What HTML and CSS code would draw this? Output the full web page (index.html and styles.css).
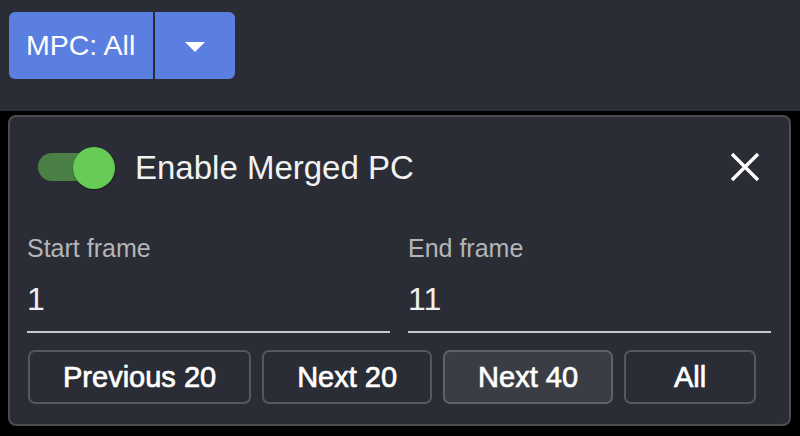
FILE: index.html
```html
<!DOCTYPE html>
<html>
<head>
<meta charset="utf-8">
<link rel="stylesheet" href="styles.css">
</head>
<body>
<div class="topbar">
  <div class="split">
    <button class="split-main">MPC: All</button>
    <button class="split-caret" aria-label="More"><span class="caret"></span></button>
  </div>
</div>
<div class="lower">
  <div class="panel">
    <div class="header">
      <div class="toggle"><span class="track"></span><span class="knob"></span></div>
      <span class="title">Enable Merged PC</span>
      <svg class="close" width="30" height="30" viewBox="0 0 30 30"><path d="M2 2 L28 28 M28 2 L2 28" stroke="#fff" stroke-width="3.4" fill="none"/></svg>
    </div>
    <div class="fields">
      <div class="field">
        <div class="label">Start frame</div>
        <div class="value">1</div>
      </div>
      <div class="field">
        <div class="label">End frame</div>
        <div class="value">11</div>
      </div>
    </div>
    <div class="buttons">
      <button class="btn">Previous 20</button>
      <button class="btn">Next 20</button>
      <button class="btn active">Next 40</button>
      <button class="btn all">All</button>
    </div>
  </div>
</div>
</body>
</html>
```
FILE: styles.css
```css
* { box-sizing: border-box; }
html, body { margin: 0; padding: 0; }
body {
  background: #000;
  font-family: "Liberation Sans", Arial, sans-serif;
  color: #fff;
  width: 800px;
  height: 436px;
  overflow: hidden;
}
.topbar {
  background: #2a2d35;
  height: 111px;
  padding: 12px 9px 0;
}
.split {
  display: flex;
  height: 67px;
  gap: 2px;
}
.split button {
  border: none;
  background: #5b7fe0;
  color: #fff;
  font-family: inherit;
  height: 67px;
  margin: 0;
}
.split-main {
  width: 144px;
  font-size: 28.5px;
  text-align: left;
  padding: 0 0 0 17px;
  border-radius: 6px 0 0 6px;
}
.split-caret {
  width: 80px;
  border-radius: 0 6px 6px 0;
  display: flex;
  align-items: center;
  justify-content: center;
  padding: 0;
}
.caret {
  display: block;
  width: 0;
  height: 0;
  border-left: 10px solid transparent;
  border-right: 10px solid transparent;
  border-top: 10px solid #fff;
  margin-top: 2px;
}
.lower {
  padding: 4px 9px 0 8px;
}
.panel {
  background: #2a2d35;
  border: 2px solid #4b4d53;
  border-radius: 8px;
  padding: 30px 18px 20px 17px;
}
.header {
  display: flex;
  align-items: center;
  height: 42px;
}
.toggle {
  position: relative;
  width: 77px;
  height: 42px;
  margin-left: 11px;
}
.track {
  position: absolute;
  left: 0;
  top: 6px;
  width: 70px;
  height: 28px;
  border-radius: 14px;
  background: #4a8045;
}
.knob {
  position: absolute;
  left: 35px;
  top: 0;
  width: 42px;
  height: 42px;
  border-radius: 50%;
  background: #66cc55;
  box-shadow: 0 1px 2px rgba(0,0,0,0.35);
}
.title {
  font-size: 33px;
  color: #f2f2f2;
  margin-left: 20px;
  flex: 1;
  line-height: 42px;
}
.close {
  margin-right: 11px;
  margin-top: -2px;
}
.fields {
  display: grid;
  grid-template-columns: 1fr 1fr;
  gap: 18px;
  margin-top: 44px;
}
.label {
  font-size: 25px;
  line-height: 30px;
  color: #b4b5b8;
}
.value {
  margin-top: 16px;
  font-size: 32px;
  line-height: 40px;
  color: #f0f0f0;
  padding-bottom: 12px;
  border-bottom: 2px solid #c9c9cb;
}
.buttons {
  display: flex;
  gap: 11px;
  margin-top: 17px;
  padding-left: 1px;
}
.btn {
  height: 54px;
  border: 2px solid #55575d;
  border-radius: 7px;
  background: #2a2d35;
  color: #fff;
  font-family: inherit;
  font-weight: normal;
  font-size: 29px;
  -webkit-text-stroke: 0.7px #fff;
  line-height: 50px;
  padding: 0 33px;
  margin: 0;
}
.btn.active {
  background: #3a3d44;
  border-color: #606268;
}
.btn.all {
  width: 132px;
  padding: 0;
}
```
